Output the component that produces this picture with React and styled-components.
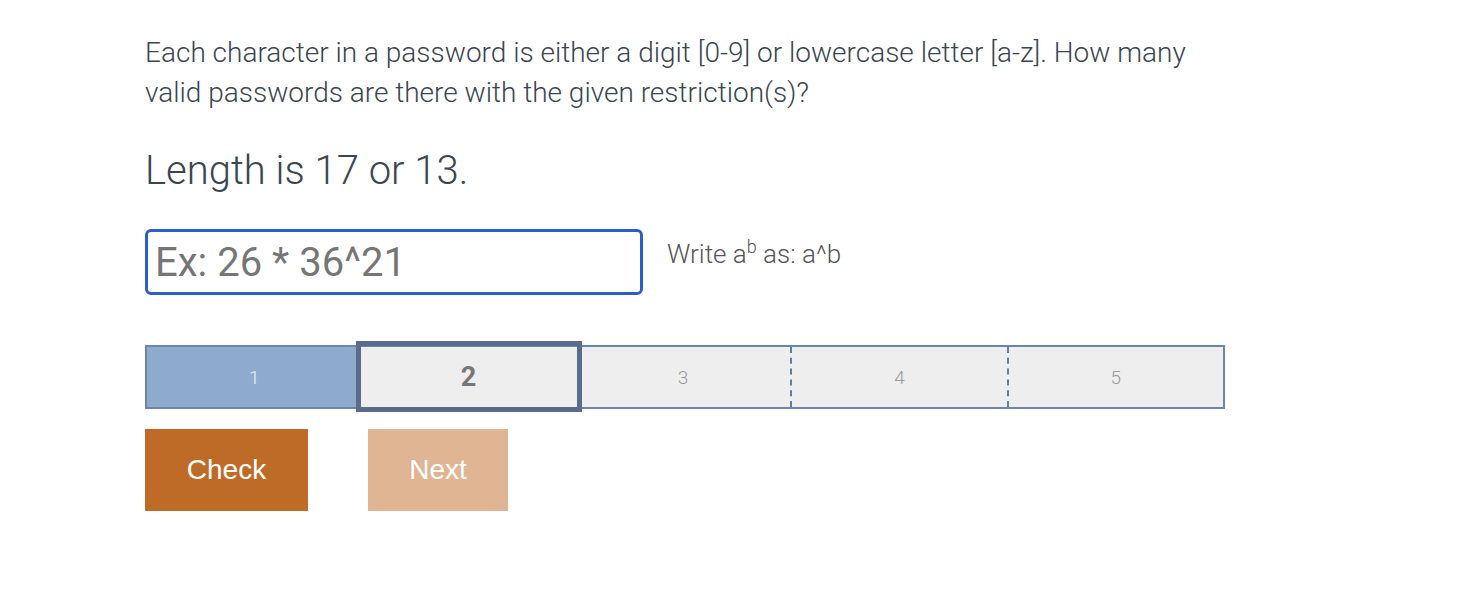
import React from 'react';
import styled, { createGlobalStyle } from 'styled-components';

const GlobalStyle = createGlobalStyle`
  body {
    margin: 0;
    background: #ffffff;
    font-family: Roboto, 'Liberation Sans', sans-serif;
  }
`;

const StyledPage = styled.div`
  padding: 33px 145px 40px;
  width: 1100px;
`;

const StyledPrompt = styled.p`
  margin: 0;
  font-size: 28px;
  line-height: 40px;
  font-weight: 300;
  color: #3a4650;
  width: 1080px;
`;

const StyledRestriction = styled.h2`
  margin: 32px 0 0;
  font-size: 40px;
  line-height: 52px;
  font-weight: 300;
  color: #3a4650;
`;

const StyledAnswerRow = styled.div`
  display: flex;
  align-items: flex-start;
  gap: 24px;
  margin-top: 32px;
`;

const StyledInput = styled.input`
  box-sizing: border-box;
  width: 498px;
  height: 66px;
  border: 3px solid #2b5ec6;
  border-radius: 6px;
  padding: 0 7px;
  font-family: Roboto, sans-serif;
  font-size: 40px;
  color: #333;
  outline: none;

  &::placeholder {
    color: #767676;
  }
`;

const StyledHint = styled.div`
  padding-top: 10px;
  font-size: 26px;
  font-weight: 300;
  color: #555;

  sup {
    font-size: 18px;
    vertical-align: 10px;
    line-height: 0;
  }
`;

const StyledProgress = styled.div`
  display: flex;
  margin-top: 50px;
  border: 2px solid #6a86aa;
  height: 60px;
  width: 1076px;
`;

const StyledStep = styled.div`
  position: relative;
  flex: 1;
  display: flex;
  align-items: center;
  justify-content: center;
  background: ${(p) => (p.$done ? '#8eabce' : '#eeeeee')};
  border-left: ${(p) => (p.$dashed ? '2px dashed #5f7ea3' : 'none')};
  color: ${(p) => (p.$done ? '#e9eef5' : p.$active ? '#777777' : '#9a9a9a')};
  font-size: ${(p) => (p.$active ? '27px' : '19px')};
  font-weight: ${(p) => (p.$active ? 700 : 300)};

  ${(p) =>
    p.$active &&
    `
    z-index: 1;
    &::after {
      content: '';
      position: absolute;
      top: -6px;
      bottom: -5px;
      left: -5px;
      right: -6px;
      border: 5px solid #5b6b8b;
    }
  `}
`;

const StyledButtons = styled.div`
  display: flex;
  gap: 60px;
  margin-top: 20px;
`;

const StyledButton = styled.button`
  height: 82px;
  padding: 0 40px;
  min-width: ${(p) => (p.$wide ? '163px' : '140px')};
  border: none;
  background: ${(p) => (p.$muted ? '#dfb593' : '#bf6b28')};
  color: #ffffff;
  font-family: 'Liberation Sans', Arial, sans-serif;
  font-size: 28px;
  cursor: pointer;
`;

const steps = [1, 2, 3, 4, 5];
const current = 2;

const App = () => {
  return (
    <StyledPage>
      <GlobalStyle />
      <StyledPrompt>
        Each character in a password is either a digit [0-9] or lowercase letter [a-z]. How many
        valid passwords are there with the given restriction(s)?
      </StyledPrompt>
      <StyledRestriction>Length is 17 or 13.</StyledRestriction>
      <StyledAnswerRow>
        <StyledInput placeholder='Ex: 26 * 36^21' />
        <StyledHint>
          Write a<sup>b</sup> as: a^b
        </StyledHint>
      </StyledAnswerRow>
      <StyledProgress>
        {steps.map((s) => (
          <StyledStep
            key={s}
            $dashed={s > current + 1}
            $done={s < current}
            $active={s === current}
          >
            {s}
          </StyledStep>
        ))}
      </StyledProgress>
      <StyledButtons>
        <StyledButton $wide>Check</StyledButton>
        <StyledButton $muted>Next</StyledButton>
      </StyledButtons>
    </StyledPage>
  );
};

export default App;
